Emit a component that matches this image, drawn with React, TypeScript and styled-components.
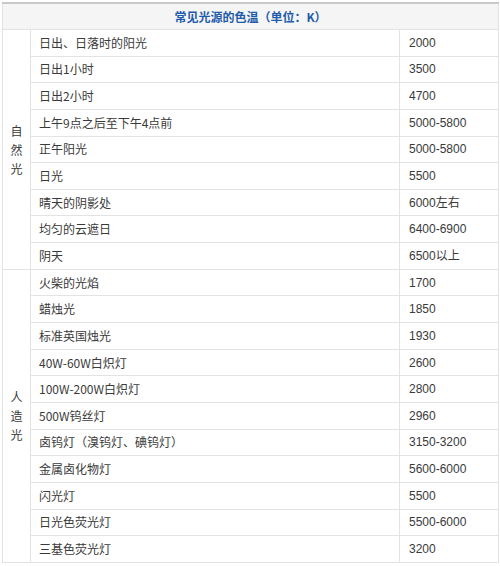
import styled, { createGlobalStyle } from 'styled-components';

const natural: [string, string][] = [
  ['日出、日落时的阳光', '2000'],
  ['日出1小时', '3500'],
  ['日出2小时', '4700'],
  ['上午9点之后至下午4点前', '5000-5800'],
  ['正午阳光', '5000-5800'],
  ['日光', '5500'],
  ['晴天的阴影处', '6000左右'],
  ['均匀的云遮日', '6400-6900'],
  ['阴天', '6500以上'],
];

const artificial: [string, string][] = [
  ['火柴的光焰', '1700'],
  ['蜡烛光', '1850'],
  ['标准英国烛光', '1930'],
  ['40W-60W白炽灯', '2600'],
  ['100W-200W白炽灯', '2800'],
  ['500W钨丝灯', '2960'],
  ['卤钨灯（溴钨灯、碘钨灯）', '3150-3200'],
  ['金属卤化物灯', '5600-6000'],
  ['闪光灯', '5500'],
  ['日光色荧光灯', '5500-6000'],
  ['三基色荧光灯', '3200'],
];

const groups = [
  { label: '自然光', rows: natural },
  { label: '人造光', rows: artificial },
];

const App = () => {
  return (
    <>
      <GlobalStyle />
      <Page>
        <Table>
          <colgroup>
            <col style={{ width: 28 }} />
            <col style={{ width: 369 }} />
            <col style={{ width: 99 }} />
          </colgroup>
          <thead>
            <tr>
              <HeadCell colSpan={3}>常见光源的色温（单位：K）</HeadCell>
            </tr>
          </thead>
          <tbody>
            {groups.map((g) =>
              g.rows.map(([name, value], i) => (
                <Row key={g.label + name}>
                  {i === 0 && (
                    <GroupCell rowSpan={g.rows.length}>
                      <GroupLabel>{g.label}</GroupLabel>
                    </GroupCell>
                  )}
                  <NameCell>{name}</NameCell>
                  <ValueCell>{value}</ValueCell>
                </Row>
              ))
            )}
          </tbody>
        </Table>
      </Page>
    </>
  );
};

const GlobalStyle = createGlobalStyle`
  html, body {
    margin: 0;
    padding: 0;
    background: #fff;
  }
  body {
    font-family: "Noto Sans CJK SC", "Liberation Sans", sans-serif;
    font-size: 12px;
    color: #3a3a3a;
  }
`;

const Page = styled.div`
  padding: 2px 2px 0 2px;
  width: 496px;
`;

const Table = styled.table`
  width: 496px;
  border-collapse: collapse;
  table-layout: fixed;
  border-top: 2px solid #c8c8c8;
`;

const HeadCell = styled.th`
  height: 25px;
  padding: 0;
  background: #f5f5f5;
  border: 1px solid #e3e3e3;
  border-top: none;
  color: #1f5bab;
  font-weight: bold;
  font-size: 12px;
  text-align: center;
  vertical-align: middle;
`;

const Row = styled.tr`
  height: 26.65px;
`;

const Cell = styled.td`
  padding: 0;
  border: 1px solid #e3e3e3;
  vertical-align: middle;
  line-height: 16px;
  white-space: nowrap;
`;

const GroupCell = styled(Cell)`
  text-align: center;
  white-space: normal;
`;

const GroupLabel = styled.span`
  display: inline-block;
  width: 13px;
  line-height: 19px;
  word-break: break-all;
`;

const NameCell = styled(Cell)`
  padding-left: 8px;
`;

const ValueCell = styled(Cell)`
  padding-left: 9px;
  font-family: "Liberation Sans", "Noto Sans CJK SC", sans-serif;
`;

export default App;
